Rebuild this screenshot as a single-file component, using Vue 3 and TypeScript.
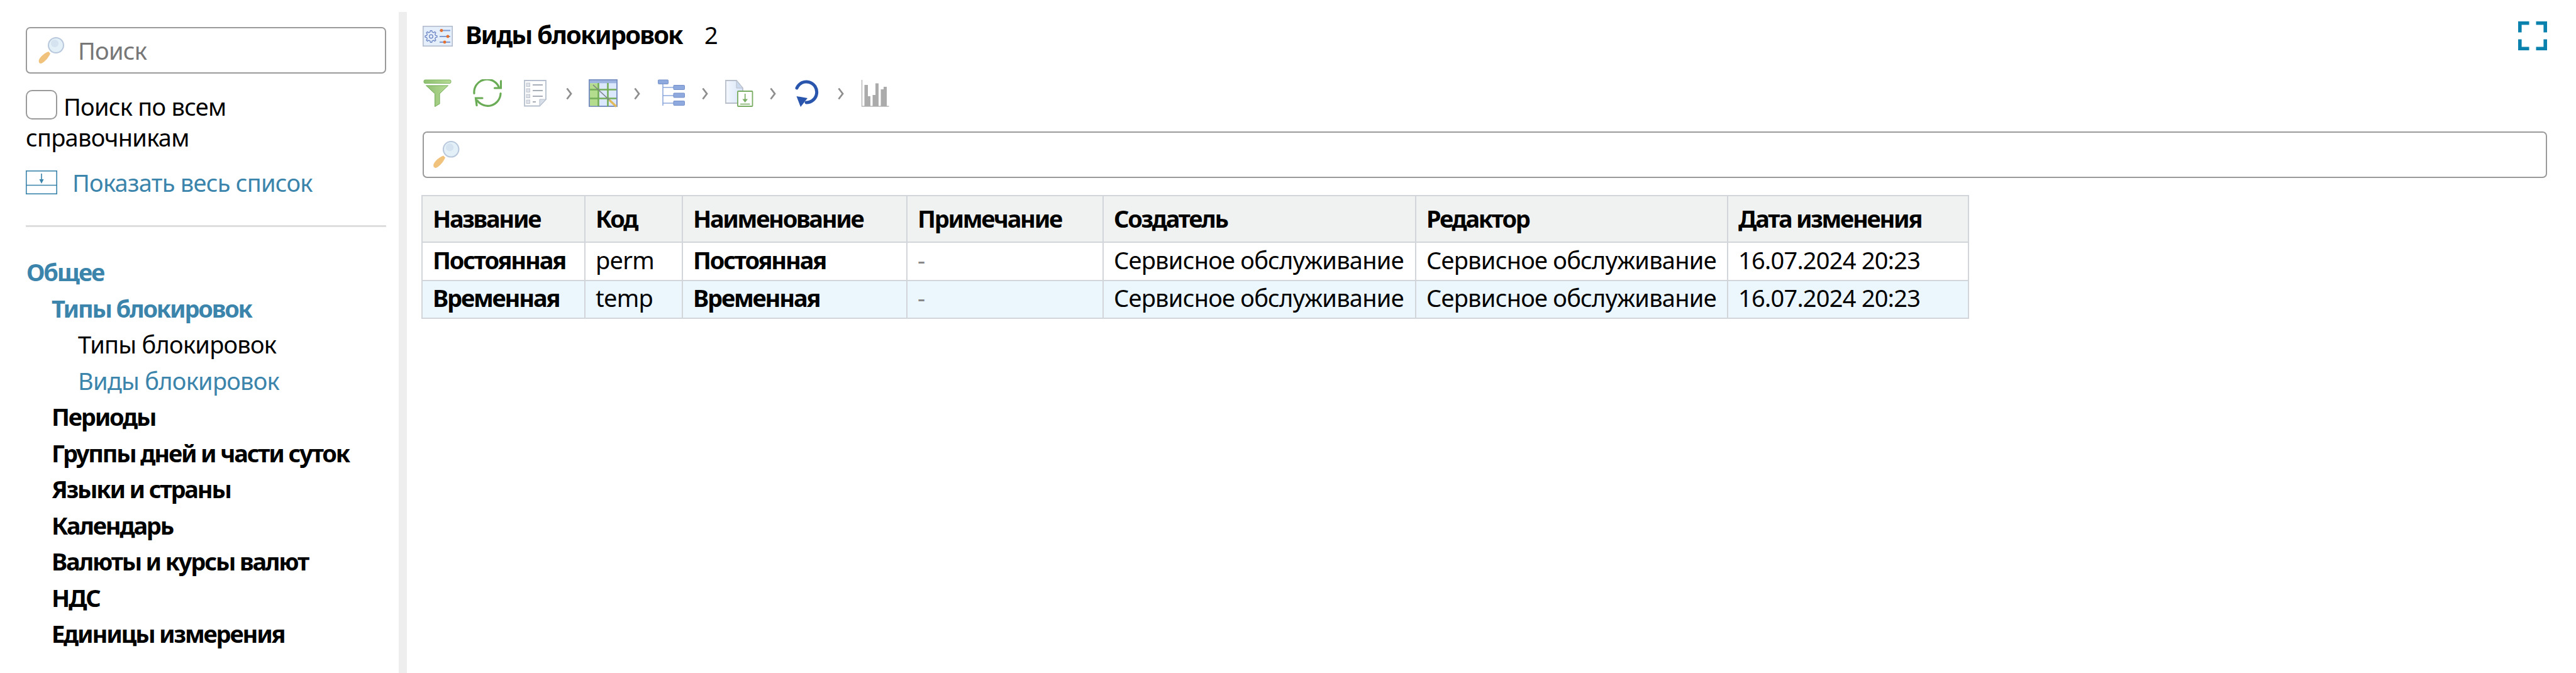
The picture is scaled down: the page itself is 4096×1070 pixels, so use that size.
<script setup lang="ts">
interface Row { name: string; code: string; title: string; note: string; creator: string; editor: string; date: string }
const columns = [
  { label: 'Название', width: 259 },
  { label: 'Код', width: 155 },
  { label: 'Наименование', width: 357 },
  { label: 'Примечание', width: 312 },
  { label: 'Создатель', width: 497 },
  { label: 'Редактор', width: 496 },
  { label: 'Дата изменения', width: 383 },
]
const rows: Row[] = [
  { name: 'Постоянная', code: 'perm', title: 'Постоянная', note: '-', creator: 'Сервисное обслуживание', editor: 'Сервисное обслуживание', date: '16.07.2024 20:23' },
  { name: 'Временная', code: 'temp', title: 'Временная', note: '-', creator: 'Сервисное обслуживание', editor: 'Сервисное обслуживание', date: '16.07.2024 20:23' },
]
const nav = [
  { text: 'Общее', cls: 'l1 bold link' },
  { text: 'Типы блокировок', cls: 'l2 bold link' },
  { text: 'Типы блокировок', cls: 'l3' },
  { text: 'Виды блокировок', cls: 'l3 link' },
  { text: 'Периоды', cls: 'l2 bold' },
  { text: 'Группы дней и части суток', cls: 'l2 bold' },
  { text: 'Языки и страны', cls: 'l2 bold' },
  { text: 'Календарь', cls: 'l2 bold' },
  { text: 'Валюты и курсы валют', cls: 'l2 bold' },
  { text: 'НДС', cls: 'l2 bold' },
  { text: 'Единицы измерения', cls: 'l2 bold' },
]
function gearPath(cx: number, cy: number, outer: number, inner: number, teeth: number): string {
  const pts: string[] = []
  const step = (Math.PI * 2) / teeth
  for (let i = 0; i < teeth; i++) {
    const a = i * step
    const seq: [number, number][] = [
      [inner, a - step * 0.5],
      [inner, a - step * 0.28],
      [outer, a - step * 0.16],
      [outer, a + step * 0.16],
      [inner, a + step * 0.28],
    ]
    for (const [r, t] of seq) {
      pts.push(`${(cx + r * Math.cos(t)).toFixed(2)} ${(cy + r * Math.sin(t)).toFixed(2)}`)
    }
  }
  return 'M' + pts.join('L') + 'Z'
}
const gear = gearPath(13.5, 17, 9.5, 7.2, 8)
</script>

<template>
  <div class="page">
    <aside class="side">
      <div class="search">
        <svg class="loupe" viewBox="0 0 42 43" width="42" height="43">
          <path d="M17 23 L20 26 C17 33 10 41 5 42 C2 42 1 39 2 36 C4 31 11 25 17 23Z" fill="#f0c27c" />
          <circle cx="29" cy="13" r="12" fill="#e3f0f8" stroke="#b9c8dc" stroke-width="2" />
          <circle cx="27" cy="10" r="6" fill="#cfdcec" opacity=".7" />
        </svg>
        <span class="placeholder">Поиск</span>
      </div>
      <div class="check-line"><span class="box"></span>Поиск по всем справочникам</div>
      <div class="show-all">
        <svg viewBox="0 0 50 38" width="50" height="38">
          <g fill="none" stroke="#3b84ab" stroke-width="1.6">
            <rect x=".8" y=".8" width="48.4" height="36.4" />
            <path d="M.8 23.5H49.2M25 5V17" />
          </g>
          <path d="M21.5 14H28.5L25 21Z" fill="#3b84ab" />
        </svg>
        <span>Показать весь список</span>
      </div>
      <div class="divider"></div>
      <nav class="nav">
        <div v-for="(item, i) in nav" :key="i" class="nav-item" :class="item.cls">{{ item.text }}</div>
      </nav>
    </aside>

    <main class="main">
      <header class="head">
        <svg class="title-icon" viewBox="0 0 48 33" width="48" height="33">
          <rect x=".8" y=".8" width="46.4" height="31.4" fill="#e5eefb" stroke="#b2bccd" stroke-width="1.6" />
          <path :d="gear" fill="none" stroke="#6d86c4" stroke-width="1.3" stroke-linejoin="round" />
          <circle cx="13.5" cy="17" r="2.8" fill="none" stroke="#6d86c4" stroke-width="1.3" />
          <path d="M27 7.500H44M27 17H44M27 26H44" stroke="#7f9bd2" stroke-width="1.800" />
          <circle cx="30" cy="7.500" r="2.400" fill="#e4702f" />
          <circle cx="40" cy="17" r="2.400" fill="#e4702f" />
          <circle cx="35" cy="26" r="2.400" fill="#e4702f" />
        </svg>
        <h1 class="title">Виды блокировок</h1>
        <span class="count">2</span>
        <svg class="full" viewBox="0 0 46 46" width="46" height="46">
          <path d="M2.800 17.500V2.800H17.500M28.500 2.800H43.200V17.500M2.800 28.500V43.200H17.500M28.500 43.200H43.200V28.500" fill="none" stroke="#0b82ad" stroke-width="5.600" />
        </svg>
      </header>

      <div class="tools">
        <svg class="ico gap-a" viewBox="0 0 46 45">
          <defs>
            <linearGradient id="gf" x1="0" x2="1"><stop offset="0" stop-color="#8fc070" /><stop offset="1" stop-color="#b6da96" /></linearGradient>
          </defs>
          <rect x="2" y="1" width="43" height="5.500" rx="2" fill="url(#gf)" stroke="#7fb663" />
          <path d="M5.500 10H40.500L27 23V39L19.500 43.500V23Z" fill="url(#gf)" stroke="#72ab56" />
        </svg>
        <svg class="ico gap-b" viewBox="0 0 46 45">
          <g fill="none" stroke="#6aac55" stroke-width="3.200" stroke-linecap="round">
            <path d="M2 22.500A20.500 20.500 0 0 1 41 12" />
            <path d="M44.500 2.800V14H34.500" />
            <path d="M44 22.500A20.500 20.500 0 0 1 7 34" />
            <path d="M15 30H4.500L6 41.500" />
          </g>
        </svg>
        <svg class="ico" viewBox="0 0 46 45">
          <path d="M6 2H40V32L30 42.500H6Z" fill="#fff" stroke="#b6bfce" stroke-width="1.800" />
          <g fill="#dfe3e9" stroke="#c0c6d0">
            <rect x="9" y="6" width="5.500" height="5.500" /><rect x="9" y="15" width="5.500" height="5.500" />
            <rect x="9" y="24" width="5.500" height="5.500" /><rect x="9" y="33" width="5.500" height="5.500" />
          </g>
          <path d="M19 9H35M19 18H35M19 27H35M19 36H24" stroke="#a9afb9" stroke-width="1.800" />
          <path d="M40 32H30V42.500Z" fill="#d9dfe8" stroke="#b6bfce" />
        </svg>
        <svg class="chev" viewBox="0 0 10 20"><path d="M1.500 1.500L8 10L1.500 18.500" fill="none" stroke="#8e8e8e" stroke-width="2.800" /></svg>
        <svg class="ico" viewBox="0 0 46 45">
          <rect x="1" y="1" width="44" height="42" fill="#dbe7fb" stroke="#6f87bd" stroke-width="1.800" />
          <rect x="1.800" y="1.800" width="42.400" height="4.500" fill="#9db4e0" />
          <rect x="2" y="6.300" width="13" height="36" fill="#b3dc8e" />
          <path d="M15.500 6V43M30.500 6V43M2 16.500H44M2 30.500H44" stroke="#74ad58" stroke-width="2.600" />
          <path d="M7 9L34 34" stroke="#7b8086" stroke-width="1.600" />
          <path d="M33 33L44 43.500" stroke="#e0b95a" stroke-width="3.400" />
        </svg>
        <svg class="chev" viewBox="0 0 10 20"><path d="M1.500 1.500L8 10L1.500 18.500" fill="none" stroke="#8e8e8e" stroke-width="2.800" /></svg>
        <svg class="ico" viewBox="0 0 46 45">
          <path d="M10 4V42M10 13H28M10 26H28M10 38H28" fill="none" stroke="#8ea8dc" stroke-width="1.600" />
          <g fill="#8da9de" stroke="#7590c8">
            <rect x="2.500" y="1" width="16" height="6.500" rx="1" />
            <rect x="27" y="9.500" width="17.500" height="7" rx="1" />
            <rect x="27" y="22" width="17.500" height="7" rx="1" />
            <rect x="27" y="34.500" width="17.500" height="7" rx="1" />
          </g>
        </svg>
        <svg class="chev" viewBox="0 0 10 20"><path d="M1.500 1.500L8 10L1.500 18.500" fill="none" stroke="#8e8e8e" stroke-width="2.800" /></svg>
        <svg class="ico" viewBox="0 0 46 45">
          <defs>
            <linearGradient id="gd" x1="0" x2="1"><stop offset="0" stop-color="#f4f8fe" /><stop offset="1" stop-color="#d7e4f8" /></linearGradient>
          </defs>
          <path d="M2 2H19L29 14V38H2Z" fill="url(#gd)" stroke="#b9bfca" stroke-width="1.800" />
          <path d="M19 2V14H29Z" fill="#cbd9ee" stroke="#b9bfca" />
          <rect x="21" y="19" width="23.500" height="24" rx="1" fill="#fff" stroke="#78ac60" stroke-width="1.800" />
          <path d="M32.700 23V34M25 39.500H40.500" stroke="#78ac60" stroke-width="1.600" />
          <path d="M28.500 31.500H37L32.700 37Z" fill="#78ac60" />
        </svg>
        <svg class="chev" viewBox="0 0 10 20"><path d="M1.500 1.500L8 10L1.500 18.500" fill="none" stroke="#8e8e8e" stroke-width="2.800" /></svg>
        <svg class="ico" viewBox="0 0 46 45">
          <path d="M7 14A16.500 16.500 0 1 1 22 37" fill="none" stroke="#2a55ad" stroke-width="5" stroke-linecap="round" />
          <path d="M6.500 27L24 30L13 44Z" fill="#2a55ad" />
        </svg>
        <svg class="chev" viewBox="0 0 10 20"><path d="M1.500 1.500L8 10L1.500 18.500" fill="none" stroke="#8e8e8e" stroke-width="2.800" /></svg>
        <svg class="ico" viewBox="0 0 46 45">
          <path d="M2.500 1V43H45.500" fill="none" stroke="#b5b5b5" stroke-width="1.400" />
          <g fill="#ababab">
            <rect x="6.500" y="9" width="5.500" height="34" /><rect x="12" y="27" width="4" height="16" />
            <rect x="19.500" y="25" width="4.500" height="18" /><rect x="24" y="6.500" width="5" height="36.500" />
            <rect x="32.500" y="16" width="4.500" height="27" /><rect x="37" y="12" width="5" height="31" />
          </g>
        </svg>
      </div>

      <div class="filter">
        <svg class="loupe2" viewBox="0 0 42 43" width="44" height="44">
          <path d="M17 23 L20 26 C17 33 10 41 5 42 C2 42 1 39 2 36 C4 31 11 25 17 23Z" fill="#f0c27c" />
          <circle cx="29" cy="13" r="12" fill="#e3f0f8" stroke="#b9c8dc" stroke-width="2" />
          <circle cx="27" cy="10" r="6" fill="#cfdcec" opacity=".7" />
        </svg>
      </div>

      <table class="grid">
        <colgroup>
          <col v-for="c in columns" :key="c.label" :style="{ width: c.width + 'px' }" />
        </colgroup>
        <thead>
          <tr><th v-for="c in columns" :key="c.label">{{ c.label }}</th></tr>
        </thead>
        <tbody>
          <tr v-for="r in rows" :key="r.code">
            <td class="strong">{{ r.name }}</td>
            <td>{{ r.code }}</td>
            <td class="strong">{{ r.title }}</td>
            <td class="dash">{{ r.note }}</td>
            <td>{{ r.creator }}</td>
            <td>{{ r.editor }}</td>
            <td>{{ r.date }}</td>
          </tr>
        </tbody>
      </table>
    </main>
  </div>
</template>

<style>
html, body { margin: 0; background: #fff; }
</style>

<style scoped>
.page {
  display: flex;
  width: 4096px;
  height: 1070px;
  overflow: hidden;
  font-family: "Noto Sans", "Open Sans", sans-serif;
  font-size: 38px;
  letter-spacing: -0.75px;
  color: #000;
  background: #fff;
}
.side {
  box-sizing: border-box;
  flex: 0 0 647px;
  margin-top: 19px;
  padding: 24px 20px 0 41px;
  border-right: 13px solid #eeeeee;
}
.search {
  box-sizing: border-box;
  height: 74px;
  display: flex;
  align-items: center;
  padding-left: 17px;
  border: 2px solid #9a9a9a;
  border-radius: 7px;
}
.placeholder { margin-left: 22px; color: #777; }
.check-line {
  margin-top: 26px;
  line-height: 49px;
}
.box {
  display: inline-block;
  box-sizing: border-box;
  width: 50px;
  height: 47px;
  margin-right: 10px;
  vertical-align: -6px;
  border: 2px solid #9a9a9a;
  border-radius: 10px;
}
.show-all {
  display: flex;
  align-items: center;
  gap: 24px;
  margin-top: 28px;
  color: #3b84ab;
  line-height: 38px;
}
.divider { height: 3px; margin-top: 49px; background: #dedede; }
.nav { margin-top: 43px; }
.nav-item { line-height: 57.5px; white-space: nowrap; }
.l1 { padding-left: 1px; }
.l2 { padding-left: 41px; }
.l3 { padding-left: 83px; }
.bold { font-weight: 700; letter-spacing: -2.2px; }
.link { color: #3b84ab; }

.main { flex: 1; min-width: 0; padding: 34px 46px 0 25px; }
.head { display: flex; align-items: center; height: 46px; }
.title-icon { flex: none; }
.title { margin: 0 0 4px 20px; font-size: 40px; font-weight: 700; line-height: 42px; letter-spacing: -1.9px; }
.count { margin: 0 0 4px 35px; }
.full { flex: none; margin-left: auto; }

.tools { display: flex; align-items: center; height: 45px; margin-top: 46px; }
.ico { flex: none; width: 46px; height: 45px; }
.gap-a { margin-right: 34px; }
.gap-b { margin-right: 30px; }
.chev { flex: none; width: 10px; height: 20px; margin: 0 26px; }

.filter {
  box-sizing: border-box;
  height: 74px;
  margin-top: 38px;
  display: flex;
  align-items: center;
  padding-left: 13px;
  border: 2px solid #9a9a9a;
  border-radius: 7px;
}
.grid {
  margin: 27px 0 0 -2px;
  width: 2459px;
  table-layout: fixed;
  border-collapse: collapse;
}
.grid th, .grid td {
  box-sizing: border-box;
  padding: 0 0 0 16px;
  border: 2px solid #d2d6da;
  text-align: left;
  white-space: nowrap;
  overflow: hidden;
}
.grid th { height: 74px; padding-bottom: 3px; background: #f0f1f1; font-weight: 700; letter-spacing: -2.3px; }
.grid td { height: 60.500px; padding-bottom: 5px; }
.grid tbody tr:nth-child(2) td { background: #ecf6fd; }
.grid td.strong { font-weight: 700; letter-spacing: -2.2px; }
.dash { color: #888; }
</style>
